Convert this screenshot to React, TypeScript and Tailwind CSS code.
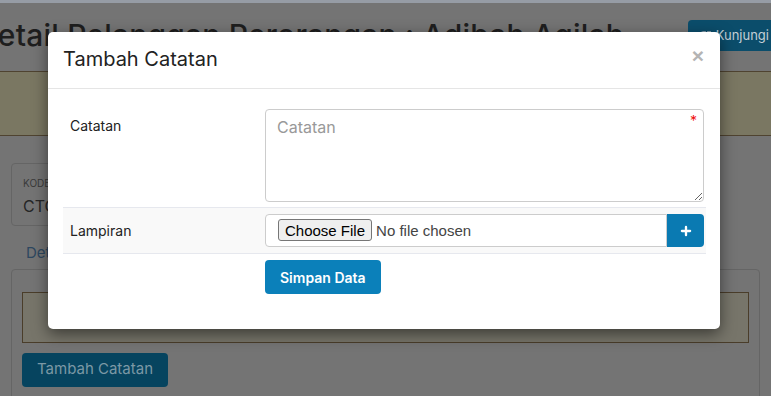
import { Plus, SquareArrowOutUpRight } from 'lucide-react';

const font = "font-['Inter','Noto_Sans',sans-serif]";

export default function App() {
  return (
    <div className={`relative w-full h-[396px] overflow-hidden bg-[#747474] ${font}`}>
      {/* Halaman di belakang (sudah diredupkan backdrop) */}
      <div className="h-[3px] bg-[#969ca5]"></div>
      <div className="flex items-start h-[68px]">
        <h1 className="ml-[-24px] mt-[10px] text-[30px] font-medium text-[#1e1e1e] whitespace-nowrap tracking-[0.2px]">
          Detail Pelanggan Perorangan : Adibah Aqilah
        </h1>
        <button className="ml-auto mt-[17px] -mr-[10px] h-[31px] px-3 flex items-center gap-1 bg-[#0b4d6b] text-[#c3cfd6] text-[13px] rounded-[4px] whitespace-nowrap">
          <SquareArrowOutUpRight size={12} strokeWidth={2} className="text-[#7e98a6]" />
          Kunjungi
        </button>
      </div>

      <div className="h-[65px] bg-[#7a7762] border-y border-[#4f4330] flex items-center justify-between px-[60px] text-[14px] text-[#473b2b] whitespace-nowrap">
        <span>Pelanggan ini terdaftar</span>
        <span>sejak 2023. <b>Klik</b></span>
      </div>

      <div className="px-[11px] pt-[27px]">
        <div className="w-[260px] h-[63px] border border-[#656565] rounded-[4px] px-[11px] pt-[14px]">
          <div className="text-[10px] text-[#3a3a3a] leading-none">KODE</div>
          <div className="text-[16px] text-[#262626] mt-[6px]">CTO-0021</div>
        </div>

        <div className="mt-[16px] px-[15px] text-[15px] text-[#2d4760]">Detail</div>

        <div className="mt-[4px] border border-[#656565] rounded-t-[4px] px-[10px] pt-[22px] h-[140px]">
          <div className="h-[51px] bg-[#77756a] border border-[#4a3d2a]"></div>
          <button className="mt-[10px] h-[34px] px-[15px] bg-[#06445f] text-[#7b98a5] text-[15px] rounded-[4px]">
            Tambah Catatan
          </button>
        </div>
      </div>

      {/* Modal Tambah Catatan */}
      <div className="absolute left-[48px] top-[32px] w-[672px] bg-white rounded-[5px] shadow-[0_5px_15px_rgba(0,0,0,0.5)]">
        <div className="h-[57px] px-[15px] flex items-center justify-between border-b border-[#e5e5e5]">
          <h4 className="text-[20px] text-[#222] mt-[-3px]">Tambah Catatan</h4>
          <span className="text-[21px] font-bold text-[#b4b4b4] leading-none mr-[1px] mt-[-10px] font-['Liberation_Sans',sans-serif]">×</span>
        </div>

        <div className="pl-[15px] pr-[14px] pt-[15px] pb-[35px]">
          <table className="w-full border-collapse text-[14px] text-[#222]">
            <tbody>
              <tr>
                <td className="w-[200px] align-top pl-[7px] pt-[11px] pb-[5px]">Catatan</td>
                <td className="px-[2px] py-[5px]">
                  <div className="relative">
                    <textarea
                      placeholder="Catatan"
                      className="block w-full h-[93px] border border-[#cccccc] rounded-[4px] px-[11px] py-[5px] text-[16px] placeholder-[#999] outline-none"
                    ></textarea>
                    <span className="absolute right-[7px] top-[5px] text-[14px] text-[#f01010] leading-none">*</span>
                  </div>
                </td>
              </tr>
              <tr className="bg-[#f9f9f9] border-y border-[#e6e8ee]">
                <td className="pl-[7px] py-[6px]">Lampiran</td>
                <td className="px-[2px] py-[6px]">
                  <div className="flex">
                    <div className="flex-1 h-[33px] border border-[#cccccc] rounded-l-[4px] bg-white px-[12px] flex items-center">
                      <input
                        type="file"
                        className="text-[15px] text-[#444] font-['Liberation_Sans',sans-serif] file:mr-[4px] file:h-[22px] file:px-[6px] file:border file:border-[#767676] file:bg-[#efefef] file:rounded-[3px] file:text-[15px] file:text-black"
                      />
                    </div>
                    <button className="w-[37px] h-[33px] bg-[#0a7ab2] rounded-r-[4px] flex items-center justify-center text-white">
                      <Plus size={14} strokeWidth={4} />
                    </button>
                  </div>
                </td>
              </tr>
              <tr>
                <td></td>
                <td className="px-[2px] pt-[6px]">
                  <button className="h-[34px] px-[15px] bg-[#0b80ba] text-white text-[14px] font-semibold rounded-[4px]">
                    Simpan Data
                  </button>
                </td>
              </tr>
            </tbody>
          </table>
        </div>
      </div>
    </div>
  );
}
